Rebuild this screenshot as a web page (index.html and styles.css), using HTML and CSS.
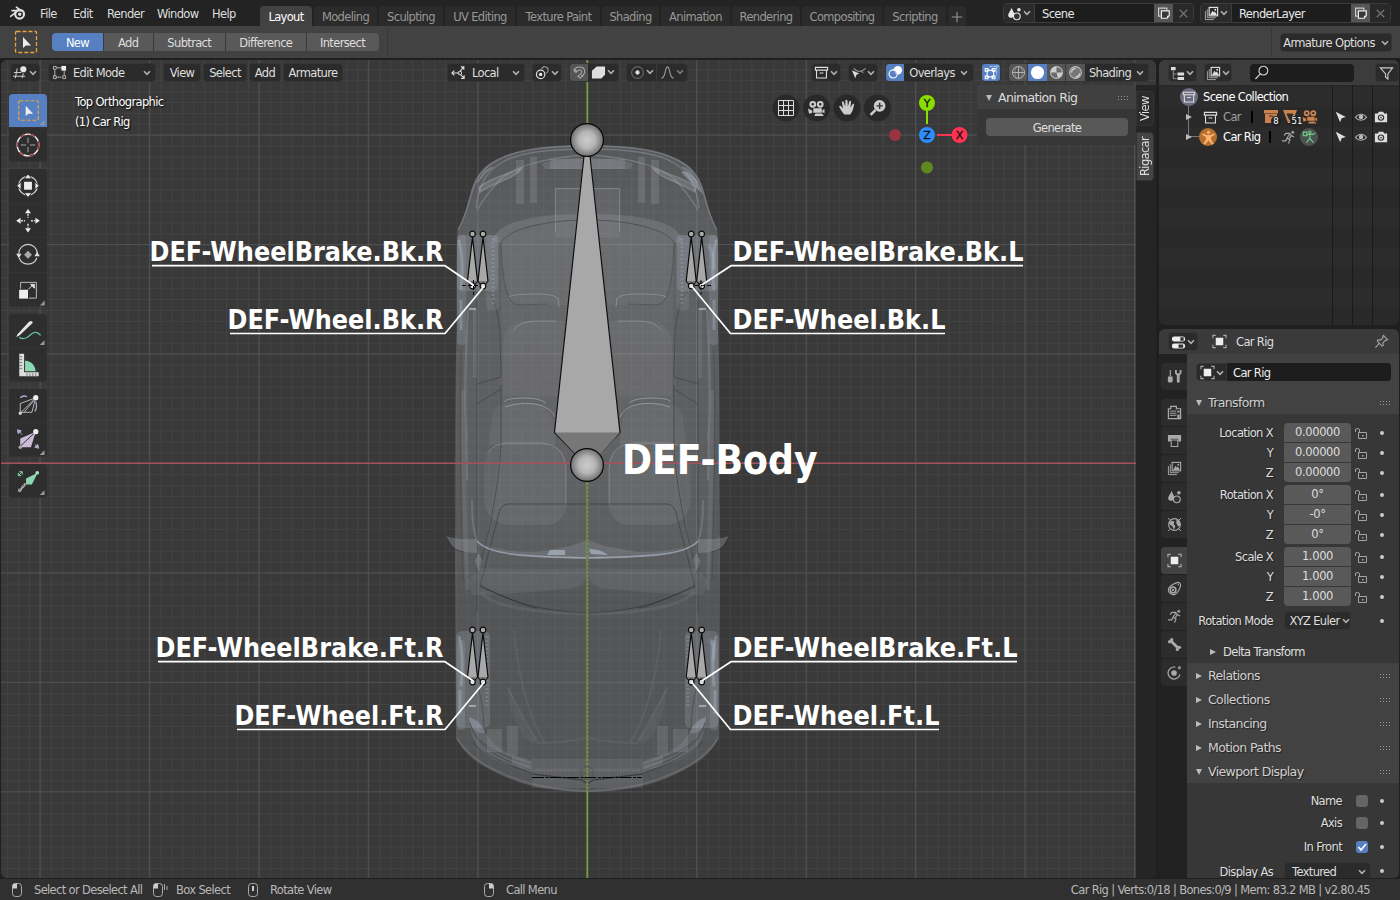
FILE: index.html
```html
<!DOCTYPE html>
<html lang="en">
<head>
<meta charset="utf-8">
<title>Car Rig</title>
<link rel="stylesheet" href="styles.css">
</head>
<body>
<svg width="0" height="0" class="defs">
<defs>
<symbol id="chev" viewBox="0 0 8 6"><path d="M1 1.2 4 4.4 7 1.2" fill="none" stroke="#b0b0b0" stroke-width="1.6"/></symbol>
<symbol id="logo" viewBox="0 0 16 14"><path d="M.6 10.4 8.2 4.4M2 4.6h7.5M6.4 1.2l5 3.8" fill="none" stroke="#e0e0e0" stroke-width="1.6" stroke-linecap="round"/><circle cx="9.6" cy="8.2" r="4.4" fill="none" stroke="#e0e0e0" stroke-width="2.2"/><circle cx="9.7" cy="8.2" r="1.7" fill="#e0e0e0"/></symbol>
<symbol id="selbox" viewBox="0 0 24 24"><rect x="1.5" y="1.5" width="21" height="21" rx="1" fill="none" stroke="#e8a33d" stroke-width="1.3" stroke-dasharray="4 2"/><path d="M9 7v11l2.8-2.6 5.2.2z" fill="#eee"/></symbol>
<symbol id="vp3d" viewBox="0 0 16 16"><path d="M4.500 3.500 2.500 14M1 8h8M0 12h13M11 9l-1.200 5" fill="none" stroke="#c8c8c8" stroke-width="1.100"/><circle cx="11" cy="4.500" r="3.300" fill="#e6e6e6"/></symbol>
<symbol id="editmode" viewBox="0 0 16 16"><path d="M3 5v7M5 3h5M5 13h5M13 6v5" fill="none" stroke="#bbb"/><path d="M1.500 1.500h3v3h-3zM1.500 11.500h3v3h-3zM11.500 11.500h3v3h-3z" fill="none" stroke="#bbb"/><rect x="10" y="1" width="5" height="5" fill="#eee"/></symbol>
<symbol id="orient" viewBox="0 0 16 16"><path d="M1 8.500h8M3.500 6 1 8.500 3.500 11M9.500 7l4-5M10.500 2h3.200v3M10 10l4 4M10.800 14.300H14V11" fill="none" stroke="#ddd" stroke-width="1.200"/><circle cx="9.500" cy="8.500" r="1.900" fill="none" stroke="#ddd"/></symbol>
<symbol id="pivot" viewBox="0 0 16 16"><circle cx="6" cy="10" r="4.500" fill="none" stroke="#ddd" stroke-width="1.300"/><circle cx="6" cy="10" r="1.800" fill="#eee"/><path d="M7 4.500A3.600 3.600 0 1 1 12 8.700" fill="none" stroke="#999" stroke-width="1.200"/></symbol>
<symbol id="magnet" viewBox="0 0 16 16"><path d="M2 5.500C5 .5 13.500 1 13.500 7c0 2-1.500 4.500-5 7L6.300 12C9 10 10.500 8.500 10.300 7 9.800 4.500 6.500 5 4.200 8zM2.800 4.800l2.500 2.200M10 10.500l1.800 1.800" fill="none" stroke="#aaa" stroke-width="1.100"/></symbol>
<symbol id="cube" viewBox="0 0 16 16"><path d="M6 1.500h9V10l-4 4.500H1V6z" fill="#dedede"/></symbol>
<symbol id="prop" viewBox="0 0 16 16"><circle cx="8" cy="8" r="6.300" fill="none" stroke="#666" stroke-width="1.200"/><circle cx="8" cy="8" r="2.300" fill="#ddd"/></symbol>
<symbol id="falloff" viewBox="0 0 16 16"><path d="M1.500 14C6.500 13.500 5 2 8 2s1.500 11.500 6.500 12" fill="none" stroke="#999" stroke-width="1.200"/></symbol>
<symbol id="box" viewBox="0 0 16 16"><path d="M1.500 2.500h13v3h-13zM2.700 5.500h10.600v8.300H2.700zM6 8.500h4" fill="none" stroke="#ddd" stroke-width="1.200"/></symbol>
<symbol id="selvis" viewBox="0 0 16 16"><path d="M1 5.500 8.800 9 5.800 10.300 4.500 14z" fill="#ddd"/><path d="M3 3.500c3.500 4.500 8 4.500 12.500 0M13 8.500l-2-2" fill="none" stroke="#999" stroke-width="1.200"/></symbol>
<symbol id="overlay" viewBox="0 0 16 16"><circle cx="10.500" cy="5.500" r="4.500" fill="#fff"/><circle cx="5.500" cy="9.500" r="4.300" fill="#5680c2" fill-opacity=".65" stroke="#fff" stroke-width="1.200"/></symbol>
<symbol id="xray" viewBox="0 0 16 16"><path d="M4 4.500h7v7H4zM2 2.500h3v3H2zM9.500 2.500h3v3h-3zM2 10.500h3v3H2zM9.500 10.500h3v3h-3z" transform="translate(-.7 1.200)" fill="none" stroke="#fff" stroke-width="1.200"/><path d="M6 1.500h7.500V11M13 1h2v2" fill="none" stroke="#c8d6ee" stroke-dasharray="3 1"/></symbol>
<symbol id="wire" viewBox="0 0 16 16"><circle cx="8" cy="8" r="6.500" fill="none" stroke="#bbb"/><path d="M1.500 8h13M8 1.500v13" stroke="#bbb"/><ellipse cx="8" cy="8" rx="4" ry="6.500" fill="none" stroke="#999" stroke-width=".8"/></symbol>
<symbol id="solid" viewBox="0 0 16 16"><circle cx="8" cy="8" r="7" fill="#fff"/></symbol>
<symbol id="mat" viewBox="0 0 16 16"><circle cx="8" cy="8" r="6.300" fill="#6b6b6b" stroke="#bbb" stroke-width="1.200"/><path d="M8 8V1.700A6.300 6.300 0 0 0 1.700 8zM8 8h6.300A6.300 6.300 0 0 1 9.500 14z" fill="#ccc"/></symbol>
<symbol id="rend" viewBox="0 0 16 16"><circle cx="8" cy="8" r="6.300" fill="#777" stroke="#bbb" stroke-width="1.200"/><path d="M3.800 8A4.200 4.200 0 0 1 8 3.800M12.500 9A5 5 0 0 1 8 13" fill="none" stroke="#ddd" stroke-width="1.300"/></symbol>
<symbol id="scene" viewBox="0 0 16 16"><path d="M5 1.500C5.500 5 8.500 7 8 10.500c-.5 2.500-5.500 3-6.500.5C.5 8 4 5 5 1.500z" fill="currentColor"/><circle cx="10.500" cy="11" r="3.600" fill="#333" stroke="currentColor" stroke-width="1.200"/><circle cx="12.700" cy="4" r="1.900" fill="currentColor"/></symbol>
<symbol id="layers" viewBox="0 0 16 16"><path d="M1.500 5.500v9h9M3.500 3.500v9h9" fill="none" stroke="#aaa"/><rect x="5.500" y="1.500" width="9" height="9" fill="none" stroke="currentColor" stroke-width="1.200"/><path d="m6.500 9.500 2.500-4.500 1.500 2 1.200-1.200 2 3.700z" fill="currentColor"/><circle cx="12" cy="4" r="1" fill="currentColor"/></symbol>
<symbol id="copy" viewBox="0 0 16 16"><path d="M4 11.500H1.800v-9h9.500V5" fill="none" stroke="#ccc" stroke-width="1.300"/><path d="M5 5.500h9V11l-2.500 3H5z" fill="#383838" stroke="#eee" stroke-width="1.400"/><path d="M14 11h-2.500v3z" fill="#eee"/></symbol>
<symbol id="x" viewBox="0 0 16 16"><path d="m4 4 8 8M12 4l-8 8" stroke="#777" stroke-width="1.200"/></symbol>
<symbol id="plus" viewBox="0 0 16 16"><path d="M8 2v12M2 8h12" stroke="#999" stroke-width="1.200"/></symbol>
<symbol id="tree" viewBox="0 0 16 16"><path d="M1 1h5v3.500H1zM8 7h7v3H8zM8 11.800h7v3H8z" fill="#ddd"/><path d="M3.500 5v8.500H7M3.500 8.500H7" fill="none" stroke="#999"/></symbol>
<symbol id="search" viewBox="0 0 16 16"><circle cx="10" cy="6" r="4.700" fill="none" stroke="#ccc" stroke-width="1.200"/><path d="M6.800 9.500 1.500 15" stroke="#ccc" stroke-width="1.400"/></symbol>
<symbol id="filter" viewBox="0 0 16 16"><path d="M1.500 2h13L9.500 8.500V14L7 12V8.500z" fill="none" stroke="#ccc" stroke-width="1.200"/></symbol>
<symbol id="arrow" viewBox="0 0 16 16"><path d="m2 2 11.500 6L8.800 9.300 7 14z" fill="#ddd"/></symbol>
<symbol id="eye" viewBox="0 0 16 16"><path d="M1.500 8.500C5 3.500 11 3.500 14.500 8.500 11 12.800 5 12.800 1.500 8.500z" fill="none" stroke="#aaa" stroke-width="1.200"/><circle cx="8" cy="8" r="2.500" fill="#bbb"/></symbol>
<symbol id="cam" viewBox="0 0 16 16"><path d="M1 4h3.500l1-2h5l1 2H15v10H1z" fill="#ddd"/><circle cx="8" cy="8.700" r="3.700" fill="#333"/><circle cx="8" cy="8.700" r="2.300" fill="#ddd"/><circle cx="8" cy="8.700" r="1" fill="#444"/></symbol>
<symbol id="man" viewBox="0 0 16 16"><circle cx="8" cy="2.600" r="1.700"/><path d="m1 5 1.200-1.400L6 5.300h4l3.800-1.700L15 5l-4.300 2.500.3 3.300 2.400 3.800-1.500 1L8 11.200l-3.900 4.400-1.500-1L5 10.800l.3-3.300z"/></symbol>
<symbol id="run" viewBox="0 0 16 16"><circle cx="12.500" cy="2.500" r="1.600" fill="#999"/><path d="M5 3.500h4L11 6l3 1.500M9.500 4 6.500 8.500l3 2L8 14.500M6.500 9 5 11.500H1M11 6 9 9M5 3.500 3.500 6" fill="none" stroke="#a6a6a6" stroke-width="1.300"/></symbol>
<symbol id="movie" viewBox="0 0 16 16"><path fill-rule="evenodd" d="M4.500 1.300a3.200 3.200 0 1 1 0 6.400 3.200 3.200 0 0 1 0-6.400zm0 2a1.200 1.200 0 1 0 0 2.400 1.200 1.200 0 0 0 0-2.400zM11.500 1.300a3.200 3.200 0 1 1 0 6.400 3.200 3.200 0 0 1 0-6.400zm0 2a1.200 1.200 0 1 0 0 2.400 1.200 1.200 0 0 0 0-2.400z"/><path d="M5 8.300h8v4.200H5zM0 8.500l4 2v2l-3 1zM13.500 10l2-1v4l-2-1zM7 13.200h6l2 2.300H6z"/></symbol>
<symbol id="obj" viewBox="0 0 16 16"><rect x="4" y="4" width="8" height="8" fill="#eee"/><path d="M1 4.500V1.500h3M12 1.500h3v3M15 11.500v3h-3M4 14.500H1v-3" fill="none" stroke="#aaa" stroke-width="1.200"/></symbol>
<symbol id="props" viewBox="0 0 16 16"><rect x="1" y="1.500" width="14" height="5.500" rx="2.500" fill="#eee"/><path d="M10 2.500h3.500v3.500H10z" fill="#333"/><rect x="1" y="9" width="14" height="5.500" rx="2.500" fill="#eee"/><path d="M8 10h5v3.500H8z" fill="#333"/></symbol>
<symbol id="pin" viewBox="0 0 16 16"><path d="m10 1.500 4.500 4.500-1.300.8-1-.3L9.500 9.500l.3 2.600-1.300.7L3.500 7.500 4.300 6.200 7 6.500 9.800 3.800 9.300 2.600zM5.500 10 1.500 14.500" fill="none" stroke="#aaa" stroke-width="1.100"/></symbol>
<symbol id="tool" viewBox="0 0 16 16"><path d="M3.500 1v7" stroke="#aaa" stroke-width="1.200"/><path d="M1 8h5v1.500c.5 2 0 4.500-1 5H2c-1-.5-1.500-3-1-5zM8.500 1v3.500L10.500 7v6.500q1.500 2.500 3 0V7l2-2.500V1L13.500 1v3.500h-3V1z" fill="#aaa"/></symbol>
<symbol id="render" viewBox="0 0 16 16"><path d="M4 4V1.500h6V4h4.500v10.500h-13V4z" fill="none" stroke="#aaa" stroke-width="1.300"/><path d="M3 6.500h7M3 8.800h7M3 11h7" stroke="#aaa"/><path d="M11 6h2.500v2H11zM11 10h2.500v4H11z" fill="#aaa"/></symbol>
<symbol id="print" viewBox="0 0 16 16"><path d="M1 2h14v7h-3V6H4v3H1z" fill="#aaa"/><path d="M4.500 7.500h7v7h-7z" fill="none" stroke="#aaa" stroke-width="1.100"/></symbol>
<symbol id="world" viewBox="0 0 16 16"><circle cx="8" cy="8" r="6.300" fill="none" stroke="#aaa" stroke-width="1.200"/><path d="m2 6 3-2 3 1-1 2.500 2 2.500-2 3.500-1-3.500L3 8zM10 3l3 1 1.500 5-2.500 1-2-3z" fill="#aaa"/><path d="M1 1l2.500 2.500M15 1l-2.500 2.500M1 15l2.500-2.500M15 15l-2.500-2.500" stroke="#aaa"/></symbol>
<symbol id="constr" viewBox="0 0 16 16"><circle cx="6.500" cy="9.500" r="3" fill="none" stroke="#aaa" stroke-width="1.600"/><path d="M1.700 8C3 5 9 2 11.500 1.500c3 0 3.500 3 2.500 5-1 3-2.500 6-5 7.500-4 2-8.500-2-7.300-6z" fill="none" stroke="#aaa" stroke-width="1.200"/><circle cx="12" cy="4" r=".8" fill="#aaa"/><circle cx="6.500" cy="9.500" r="1.200" fill="#aaa"/></symbol>
<symbol id="bone" viewBox="0 0 16 16"><path d="M4.500 4.500l7 7" stroke="#aaa" stroke-width="3"/><circle cx="2.800" cy="5" r="1.800" fill="#aaa"/><circle cx="5" cy="2.800" r="1.800" fill="#aaa"/><circle cx="13.200" cy="11" r="1.800" fill="#aaa"/><circle cx="11" cy="13.200" r="1.800" fill="#aaa"/></symbol>
<symbol id="phys" viewBox="0 0 16 16"><circle cx="7.500" cy="8.500" r="3" fill="#aaa"/><path d="M9 2.300A6.400 6.400 0 1 0 13.800 10" fill="none" stroke="#aaa" stroke-width="1.300"/><circle cx="13.200" cy="3" r="1.900" fill="#888"/></symbol>
<symbol id="lock" viewBox="0 0 13 12"><path d="M1.500 5V3Q1.500 1.500 3 1.500h.5Q5.500 1.500 5.500 3v2.500" fill="none" stroke="#a4a4a4"/><path d="M4.500 5.500h8v6h-8z" fill="none" stroke="#a4a4a4"/><path d="M8 8h1.500v1.500H8z" fill="#a4a4a4"/></symbol>
<symbol id="grip" viewBox="0 0 12 6"><path d="M1 1.500h11M1 4.500h11" stroke="#999" stroke-width="1" stroke-dasharray="1 2"/></symbol>
<symbol id="grid" viewBox="0 0 16 16"><path d="M.5.500h15v15H.5zM5.500 0v16M10.500 0v16M0 5.500h16M0 10.500h16" fill="none" stroke="#ddd"/></symbol>
<symbol id="hand" viewBox="0 0 16 16"><path d="M5.500 14.500C3 12 2 9.500.5 7c.5-1.200 1.800-.8 2.500.5L4.300 9 3.200 3c.3-1.200 1.400-1.200 1.800 0l1.300 4.300L6.500 1.500c.4-1.200 1.500-1.200 1.900 0L8.800 7l1.400-4.800c.5-1 1.600-.8 1.700.4L11.200 8l2-3c.7-.9 1.600-.4 1.400.7C13.800 9 13.500 12 11 14.500z" fill="#ccc"/></symbol>
<symbol id="zoomi" viewBox="0 0 16 16"><circle cx="10" cy="6" r="5.500" fill="#ccc"/><path d="M10 3v6M7 6h6" stroke="#333" stroke-width="1.400"/><path d="M6 10 1.500 14.500" stroke="#ccc" stroke-width="2.500"/></symbol>
<symbol id="ml" viewBox="0 0 12 16"><rect x="1.500" y="1.500" width="9" height="13" rx="3" fill="none" stroke="#aaa"/><path d="M1.500 6.500V3.500q0-2 2-2H6v5z" fill="#ccc"/></symbol>
<g id="corner"><path d="M38 29v5h-5z" fill="#999"/></g>
</defs>
</svg>

<div class="topbar">
  <svg class="logo"><use href="#logo"/></svg>
  <nav class="menus"><span class="m1">File</span><span class="m2">Edit</span><span class="m3">Render</span><span class="m4">Window</span><span class="m5">Help</span></nav>
  <div class="tabs">
    <span class="tab on w52">Layout</span><span class="tab w63">Modeling</span><span class="tab w64">Sculpting</span><span class="tab w70">UV Editing</span><span class="tab w83">Texture Paint</span><span class="tab w57">Shading</span><span class="tab w69">Animation</span><span class="tab w68">Rendering</span><span class="tab w80">Compositing</span><span class="tab w62">Scripting</span><span class="tab w18"><svg class="i14"><use href="#plus"/></svg></span>
  </div>
  <div class="idbox sc"><span class="idi"><svg class="i16"><use href="#scene"/></svg><svg class="ch"><use href="#chev"/></svg></span><span class="idn">Scene</span><span class="idc"><svg class="i14"><use href="#copy"/></svg></span><span class="idx"><svg class="i16"><use href="#x"/></svg></span></div>
  <div class="idbox rl"><span class="idi"><svg class="i16"><use href="#layers"/></svg><svg class="ch"><use href="#chev"/></svg></span><span class="idn">RenderLayer</span><span class="idc"><svg class="i14"><use href="#copy"/></svg></span><span class="idx"><svg class="i16"><use href="#x"/></svg></span></div>
</div>

<div class="toolset">
  <svg class="i24"><use href="#selbox"/></svg>
  <div class="seg"><span class="on w51">New</span><span class="w48">Add</span><span class="w71">Subtract</span><span class="w80">Difference</span><span class="w73">Intersect</span></div>
  <i class="div1"></i>
  <i class="div2"></i>
  <div class="b armopt"><span>Armature Options</span><svg class="ch"><use href="#chev"/></svg></div>
</div>

<div class="main">
  <div class="viewport">
    <svg class="scene" viewBox="1 60 1155 818">
      <defs>
        <pattern id="minor" x="587.200" y="463.200" width="10.945" height="10.945" patternUnits="userSpaceOnUse"><path d="M0 .5h10.945M.5 0v10.945" stroke="#424242" stroke-width="1"/></pattern>
        <pattern id="major" x="586.700" y="462.900" width="109.450" height="109.450" patternUnits="userSpaceOnUse"><path d="M0 .5h109.450M.5 0v109.450" stroke="#505050" stroke-width="1.100"/></pattern>
        <radialGradient id="ball"><stop offset="0" stop-color="#cccccc"/><stop offset=".5" stop-color="#b6b6b6"/><stop offset="1" stop-color="#707070"/></radialGradient>
        <linearGradient id="bodyg" x1="0" y1="145" x2="0" y2="792" gradientUnits="userSpaceOnUse"><stop offset="0" stop-color="#9a9ea6" stop-opacity=".3"/><stop offset=".15" stop-color="#a3a6ab" stop-opacity=".34"/><stop offset=".6" stop-color="#9a9da2" stop-opacity=".32"/><stop offset=".7" stop-color="#8e9196" stop-opacity=".32"/><stop offset="1" stop-color="#8b8f94" stop-opacity=".32"/></linearGradient>
        <linearGradient id="seatg" x1="0" y1="0" x2="0" y2="1"><stop offset="0" stop-color="#c0c4ca" stop-opacity=".06"/><stop offset="1" stop-color="#c0c4ca" stop-opacity=".1"/></linearGradient>
        <linearGradient id="cabing" x1="0" y1="220" x2="0" y2="590" gradientUnits="userSpaceOnUse"><stop offset="0" stop-color="#b4b7bc" stop-opacity=".12"/><stop offset=".7" stop-color="#b4b8be" stop-opacity=".07"/><stop offset="1" stop-color="#b4b8be" stop-opacity=".03"/></linearGradient>
        <filter id="soft" x="-20%" y="-20%" width="140%" height="140%"><feGaussianBlur stdDeviation="1.300"/></filter>
        <filter id="soft2" x="-20%" y="-20%" width="140%" height="140%"><feGaussianBlur stdDeviation=".6"/></filter>
        <!-- left half of the car, mirrored for the right -->
        <g id="half">
          <path d="M587.500 145C540 145 515 150 497 159 481 167 474 178 470 195 466 210 464 219 458 229 456 240 457 300 457 330 455 360 455 480 455 560L456 738C462 750 472 759 482 765 497 774 515 782 532 786 550 790 570 792 587.500 792z" fill="url(#bodyg)"/>
          <path d="M587.500 146C540 146 515 151 498 160 482 168 475 179 471 195 467 210 464 219 458 230" fill="none" stroke="#878d96" stroke-width="1.400" stroke-opacity=".6"/>
          <path d="M587.500 149C545 149 515 154 501 163 486 172 479 184 476 208M587.500 155C545 157 510 168 500 180 490 190 483 200 477 210" fill="none" stroke="#a3a7ae" stroke-opacity=".4" stroke-width="1.300"/>
          <path d="M479 187C490 178 505 175 522 168 516 178 500 180 480 192zM477 183l8-12 8-4" fill="#c3cad4" fill-opacity=".2" stroke="#c3cad4" stroke-opacity=".25" stroke-width="1.500"/>
          <g filter="url(#soft2)" fill="#c4cad4" fill-opacity=".16"><rect x="516" y="160" width="8" height="44"/><rect x="530" y="157" width="7" height="46"/><path d="M542 164q10-6 45.500-6v11H545z"/><path d="M550 159h37.500v10H550z"/></g>
          <path d="M587.500 188.500H555.500V238H587.500" fill="#c4cad4" fill-opacity=".09"/><path d="M587.500 188.500H555.500V232" fill="none" stroke="#b8bec6" stroke-opacity=".35"/>
          <path d="M587.500 214C550 214 525 217 505 226 497 231 494 236 492 242L501 243C505 232 540 219 587.500 220z" fill="#aeb4bd" fill-opacity=".2"/>
          <path d="M501 243C506 230 545 220 587.500 220V305H520C508 305 505 290 501 243z" fill="#b8bcc4" fill-opacity=".05"/>
          <path d="M501 243C506 230 545 220 587.500 220M501 243C502 280 506 305 519 305L548 304" fill="none" stroke="#393b3e" stroke-opacity=".55"/>
          <path d="M509 297q2-3 28-3 16 0 21 4l1 9" fill="none" stroke="#c2c7cf" stroke-opacity=".35"/>
          <path d="M587.500 220C545 220 506 230 501 243L502 440 483 560 481 590H587.500z" fill="url(#cabing)"/>
          <path d="M503 345q1-24 25-24h35q24 1 24.500 20v55H503z" fill="#c0c4ca" fill-opacity=".07"/>
          <path d="M513 331q6-10 24-10h20" fill="none" stroke="#cacdd2" stroke-opacity=".3"/>
          <path d="M492 415q4-12 20-12h20q20 2 22 25l1 17h-66z" fill="url(#seatg)"/>
          <path d="M504 402q2-4 20-4 16 0 22 5M505 407q20-7 38-1 9 4 12 11" fill="none" stroke="#d0d5dc" stroke-opacity=".4"/>
          <path d="M484 470q0-27 24-27h34q24 1 24 26v36q-2 20-22 20h-36q-21-3-24-24z" fill="url(#seatg)"/>
          <path d="M488 453q5-10 22-10h30q24 1 26 25v37" fill="none" stroke="#ccd0d6" stroke-opacity=".27"/>
          <!-- side glass -->
          <path d="M463 345q8-35 23-55 13 8 15 50l1 66q0 50-8 95l-13 85-14-12q-6-30-6-100z" fill="#9aa0aa" fill-opacity=".06"/>
          <path d="M487 292q9 5 13 40l1 45-24 7M501 389l-24 15M477 300V612M501 385V440q0 30-12 90l-11 43" fill="none" stroke="#36383b" stroke-opacity=".55"/>
          <path d="M468 310q-5 90-1 130M472 500q0 30 5 40M466 430l1 50" fill="none" stroke="#b3bfd0" stroke-opacity=".22" stroke-width="2"/>
          <path d="M475 308v70M463 390q0 80 4 200" fill="none" stroke="#afb7c5" stroke-opacity=".13" stroke-width="4"/>
          <path d="M456 345q-1 100 0 190M461 350q-2 100 2 230" fill="none" stroke="#2f3134" stroke-opacity=".25"/>
          <path d="M498 517q2-13 10-13h79.500" fill="none" stroke="#2d2f31" stroke-opacity=".55"/>
          <path d="M498 517 480 586" stroke="#2d2f31" stroke-opacity=".5" fill="none"/>
          <!-- wiper cowl and dashboard -->
          <path d="M446 536q12 4 31 3v14q-18 0-25-7z" fill="#93979c" fill-opacity=".4"/><path d="M446 536q4 14 18 16" fill="none" stroke="#2f3134" stroke-opacity=".5"/>
          <path d="M471 545l7 8-3 8 4 12 3-13-3-6" fill="#a9b5c6" fill-opacity=".3"/>
          <path d="M478 541q20 12 60 11l32-6 17.500-6V558Q505 559 478 541z" fill="#a4adbb" fill-opacity=".22"/>
          <path d="M477 541c12 14 50 16 110.500 17" fill="none" stroke="#becbdc" stroke-opacity=".55" stroke-width="1.700" filter="url(#soft2)"/>
          <path d="M587 575q-4 13-20 14-50 5-95 6l-5-15 13-12q60 2 107 0z" fill="#9aa3b3" fill-opacity=".12"/>
          <path d="M480 585C510 602 540 611 587.500 613M480 587C510 598 525 607 537 608" fill="none" stroke="#2e3033" stroke-opacity=".6"/>
          <path d="M481 592q15 20 106.500 22" fill="none" stroke="#a6aaae" stroke-opacity=".12" stroke-width="3"/>
          <!-- bonnet -->
          <path d="M508 688q15 30 30 55M514 630q6 70 30 112M537 743q25 0 50-5" fill="none" stroke="#b9bcc0" stroke-opacity=".09" stroke-width="2"/>
          <path d="M507 685l20 40 10 15-4 4q-20-10-26-59z" fill="#fff" fill-opacity=".04"/>
          <!-- wheels -->
          <g fill="#aeb8c8" fill-opacity=".2"><rect x="457" y="235" width="41" height="56" rx="5"/><rect x="457" y="235" width="9" height="110" rx="4"/><rect x="486" y="235" width="13" height="75" rx="4" fill-opacity=".14"/><rect x="456" y="631" width="34" height="97" rx="6"/><rect x="457" y="640" width="8" height="90" rx="3"/></g>
          <g fill="none" stroke="#b9c8dd" stroke-opacity=".3" stroke-width="3" filter="url(#soft2)"><path d="M459 240q5 20 2 50M461 300v30M459 636q5 20 2 50M460 690v24"/><path d="M493 238v66M487 636v70" stroke-dasharray="2 2" stroke-opacity=".2"/></g>
          <path d="M469 309h7M469 706h7" stroke="#ddd" stroke-opacity=".5" stroke-width="2"/>
          <path d="M479 690q4 15 5 38" fill="none" stroke="#35383b" stroke-opacity=".5"/>
          <!-- head lamp and bumper -->
          <path d="M469 717q8 2 18 18 10 17 44 27v8q-30-4-49-18-12-12-13-35z" fill="#b7c2d4" fill-opacity=".14"/>
          <path d="M469 717q14 4 16 16-13 2-16-16z" fill="#c7d4e6" fill-opacity=".2"/>
          <path d="M470 723q7 30 61 47M480 740q15 15 51 25M473 742q10 15 59 31" fill="none" stroke="#2f3235" stroke-opacity=".5"/>
          <g fill="#c4cad4" fill-opacity=".14"><rect x="487" y="729" width="15" height="23"/><rect x="507" y="726" width="11" height="29"/><path d="M512 754l20 7v12l-20-9z"/></g>
          <path d="M457 738q10 17 30 28 20 11 45 18 25 6 55 7" fill="none" stroke="#8b8f94" stroke-opacity=".35" stroke-width="1.500"/>
          <path d="M587.500 759H532v29h55.500z" fill="#c4c8ce" fill-opacity=".1"/><path d="M532 774l50 6 5 3.500" fill="none" stroke="#303235" stroke-opacity=".7" stroke-width="1.500"/>
          <path d="M535 770h52" stroke="#888" stroke-opacity=".3" stroke-width="3" stroke-dasharray="2 1"/>
        </g>
        <g id="smallbone" stroke="#0b0b0b" stroke-width="1.200"><path d="M0 3-5 47l5 6 5-6z" fill="#a8a8a8"/><path d="M-4.500 47h9L0 53z" fill="#7b7b7b" stroke="none"/><circle r="2.800" fill="#ababab"/><circle cy="52" r="2.800" fill="#ddd"/></g>
      </defs>
      <rect x="1" y="60" width="1155" height="818" fill="#393939"/>
      <rect x="1" y="60" width="1155" height="818" fill="url(#minor)"/>
      <rect x="1" y="60" width="1155" height="818" fill="url(#major)"/>
      <use href="#half"/>
      <use href="#half" transform="translate(1175 0) scale(-1 1)"/>
      <path d="M550 550h15v5h-18zM589 549q12 0 19 6l-17-1z" fill="#cfe0f4" fill-opacity=".45" filter="url(#soft2)"/>
      <path d="M681 172q8-4 18 12l4 10q-9-8-22-22z" fill="#c9d8ec" fill-opacity=".35" filter="url(#soft2)"/>
      <path d="M708 245q6 5 6 25M710 640q6 5 3 20" stroke="#b6c8e0" stroke-width="3" stroke-opacity=".35" fill="none" filter="url(#soft)"/>
      <path d="M1 463.300h1135" stroke="#a6505c" stroke-width="1.500"/>
      <path d="M587.300 60v818" stroke="#789a40" stroke-width="1.800"/>
      <path d="M587.500 481v311" stroke="#5c713a" stroke-width="1" stroke-dasharray="2 2"/>
      <circle cx="587" cy="773" r="6.500" fill="none" stroke="#55585a" stroke-width="1.300"/>
      <path d="M532 777.500h110" stroke="#050505" stroke-width="1.200" stroke-dasharray="12 1.500 3 1"/>
      <use href="#smallbone" x="472.500" y="234"/><use href="#smallbone" x="483" y="234"/><use href="#smallbone" x="691.200" y="234"/><use href="#smallbone" x="701.700" y="234"/>
      <use href="#smallbone" x="472.500" y="630"/><use href="#smallbone" x="483" y="630"/><use href="#smallbone" x="691.200" y="630"/><use href="#smallbone" x="701.700" y="630"/>
      <path d="M462 285.500h17M473.500 280v15M695 285.500h17M701 280v15" stroke="#0b0b0b" stroke-dasharray="4 2"/>
      <path d="M554.500 432.500 584 156h6l30 276.500-20 21h-25z" fill="#a8a8a8" stroke="#101010" stroke-width="1.200"/>
      <path d="M555 432.500h65l-20 22h-24z" fill="#777"/>
      <circle cx="587" cy="140" r="16.400" fill="url(#ball)" stroke="#060606" stroke-width="1.200"/>
      <circle cx="587" cy="465" r="16.400" fill="url(#ball)" stroke="#060606" stroke-width="1.200"/>
      <g fill="none" stroke="#fff" stroke-width="1.700" stroke-linejoin="round">
        <path d="M152 265.700h293l28 19M230 333.500h215l39-47M158 661.700h287l28 19M237 729.500h208l39-47"/>
        <path d="M1023 265.700H731l-29 19M945 333.500H730.500L691.500 286M1017 661.700H731l-29 19M939 729.500H730.500L691.500 682"/>
      </g>
      <g class="lab">
        <text x="149.500" y="260.500" textLength="294" lengthAdjust="spacingAndGlyphs">DEF-WheelBrake.Bk.R</text>
        <text x="227.500" y="328.500" textLength="216" lengthAdjust="spacingAndGlyphs">DEF-Wheel.Bk.R</text>
        <text x="155.500" y="656.500" textLength="288" lengthAdjust="spacingAndGlyphs">DEF-WheelBrake.Ft.R</text>
        <text x="234.500" y="724.500" textLength="209" lengthAdjust="spacingAndGlyphs">DEF-Wheel.Ft.R</text>
        <text x="732.500" y="260.500" textLength="291" lengthAdjust="spacingAndGlyphs">DEF-WheelBrake.Bk.L</text>
        <text x="732.500" y="328.500" textLength="213" lengthAdjust="spacingAndGlyphs">DEF-Wheel.Bk.L</text>
        <text x="732.500" y="656.500" textLength="285" lengthAdjust="spacingAndGlyphs">DEF-WheelBrake.Ft.L</text>
        <text x="732.500" y="724.500" textLength="207" lengthAdjust="spacingAndGlyphs">DEF-Wheel.Ft.L</text>
        <text x="622" y="474" textLength="195.500" lengthAdjust="spacingAndGlyphs" class="big">DEF-Body</text>
      </g>
      <!-- navigation gizmo -->
      <path d="M927 103v21" stroke="#8bdc00" stroke-width="2"/><path d="M937 135h15" stroke="#ff3352" stroke-width="2"/>
      <circle cx="895" cy="135" r="6" fill="#993442"/><circle cx="927" cy="167.500" r="6" fill="#5f8820"/>
      <circle cx="927" cy="103" r="8" fill="#8bdc00"/><circle cx="927" cy="135" r="8" fill="#2e8cff"/><circle cx="959.500" cy="135" r="8" fill="#ff3352"/>
      <g class="ax"><text x="927" y="107">Y</text><text x="927" y="139">Z</text><text x="959.500" y="139">X</text></g>
      <g fill="#292929"><circle cx="786" cy="108" r="13.500"/><circle cx="816.500" cy="108" r="13.500"/><circle cx="847" cy="108" r="13.500"/><circle cx="877.500" cy="108" r="13.500"/></g>
      <use href="#grid" x="778" y="100" width="16" height="16"/><use href="#movie" x="808" y="99.500" width="17" height="17" fill="#ccc"/><use href="#hand" x="838.500" y="99" width="17" height="17"/><use href="#zoomi" x="869" y="99.500" width="17" height="17"/>
    </svg>

    <div class="vhead">
      <div class="b w30"><svg class="i16"><use href="#vp3d"/></svg><svg class="ch"><use href="#chev"/></svg></div>
      <div class="b mode"><svg class="i15"><use href="#editmode"/></svg><span>Edit Mode</span><svg class="ch"><use href="#chev"/></svg></div>
      <div class="hm"><span class="b w38">View</span><span class="b w44">Select</span><span class="b w32">Add</span><span class="b w60">Armature</span></div>
      <div class="b local"><svg class="i16"><use href="#orient"/></svg><span>Local</span><svg class="ch"><use href="#chev"/></svg></div>
      <div class="b w30 g7"><svg class="i16"><use href="#pivot"/></svg><svg class="ch"><use href="#chev"/></svg></div>
      <div class="b pair g7"><span class="gr w18"><svg class="i15"><use href="#magnet"/></svg></span><span class="w30"><svg class="i16"><use href="#cube"/></svg><svg class="ch"><use href="#chev"/></svg></span></div>
      <div class="b pair g7"><span class="w30 sep"><svg class="i16"><use href="#prop"/></svg><svg class="ch"><use href="#chev"/></svg></span><span class="w30"><svg class="i16"><use href="#falloff"/></svg><svg class="ch dim"><use href="#chev"/></svg></span></div>
      <div class="vright">
        <div class="b w30"><svg class="i16"><use href="#box"/></svg><svg class="ch"><use href="#chev"/></svg></div>
        <div class="b w30"><svg class="i16"><use href="#selvis"/></svg><svg class="ch"><use href="#chev"/></svg></div>
        <div class="b pair ovl"><span class="bl w18"><svg class="i16"><use href="#overlay"/></svg></span><span class="w69 tx">Overlays<svg class="ch"><use href="#chev"/></svg></span></div>
        <div class="b pair"><span class="bl w18"><svg class="i16"><use href="#xray"/></svg></span></div>
        <div class="b pair"><span class="gr w19 sep"><svg class="i16"><use href="#wire"/></svg></span><span class="bl w19"><svg class="i16"><use href="#solid"/></svg></span><span class="gr w19 sep"><svg class="i16"><use href="#mat"/></svg></span><span class="gr w19"><svg class="i16"><use href="#rend"/></svg></span><span class="w63 tx">Shading<svg class="ch"><use href="#chev"/></svg></span></div>
      </div>
    </div>

    <div class="info"><span>Top Orthographic</span><span>(1) Car Rig</span></div>

    <div class="tools">
      <div class="tg">
        <svg class="on" viewBox="0 0 38 34"><use href="#selbox" x="8" y="5.500" width="23" height="23"/><use href="#corner" x="-2" y="-2"/></svg>
        <svg viewBox="0 0 38 34"><circle cx="19" cy="17.500" r="11.200" fill="none" stroke="#eee" stroke-width="1.400"/><circle cx="19" cy="17.500" r="11.200" fill="none" stroke="#a03a3a" stroke-width="1.400" stroke-dasharray="5 6"/><path d="M19 10v5.500M19 19.500V25M11.500 17.500H17M21 17.500h5.500" stroke="#aaa"/></svg>
      </div>
      <div class="tg tall">
        <svg viewBox="0 0 38 34"><circle cx="19" cy="17" r="9.500" fill="none" stroke="#ddd" stroke-width="1.200"/><rect x="15" y="13" width="8" height="8" fill="#eee"/><path d="m15 10 4-5 4 5zM15 24l4 5 4-5zM12 13l-4.500 4 4.500 4zM26 13l4.500 4-4.500 4z" fill="#eee" stroke="#303030"/></svg>
        <svg viewBox="0 0 38 34"><path d="m16 9.500 3-4.500 3 4.500zM16 24.500l3 4.500 3-4.500zM11.500 14 7 17l4.500 3zM26.500 14l4.500 3-4.500 3z" fill="#eee"/><path d="M19 10v4M19 20v4M12 17h4M22 17h4" stroke="#ddd" stroke-width="1.500" stroke-dasharray="2 1"/></svg>
        <svg viewBox="0 0 38 34"><path d="M9.500 16a9.500 9.500 0 0 1 19 0M28 20a9.500 9.500 0 0 1-18 0" fill="none" stroke="#ccc" stroke-width="1.200"/><path d="M7 16h5.500L9.700 20.500zM25.500 18.500h5.500L28.300 14z" fill="#ddd"/><path d="m19 13 4 4-4 4-4-4z" fill="#aaa"/></svg>
        <svg viewBox="0 0 38 34"><path d="M11.500 16V9.500h16v16H20" fill="none" stroke="#bbb"/><rect x="10" y="17" width="9" height="9" fill="#eee"/><path d="m19.500 16.500 4-4M21.500 11.500h4V15.500z" stroke="#ddd" fill="#ddd"/><use href="#corner" x="-2" y="-1"/></svg>
      </div>
      <div class="tg">
        <svg viewBox="0 0 38 34"><path d="m8 21 12-13q3-2 4 1L11 21.500 7 24z" fill="#e4e4e4"/><path d="M10 24c5 3 8 1 11-2s7-5 11 0" fill="none" stroke="#68c49a" stroke-width="1.400"/><use href="#corner" x="-2" y="-2"/></svg>
        <svg viewBox="0 0 38 34"><path d="M10 6h5v19h15v4H10z" fill="#ddd"/><path d="M10 9h3M10 12h3M10 15h3M10 18h3M10 21h3M18 29v-3M21 29v-3M24 29v-3M27 29v-3" stroke="#777"/><path d="M16 24V13c7 1 10 5 11 11z" fill="#8bd9b2"/><path d="M16 12c8 1 11 6 12 12" fill="none" stroke="#333"/></svg>
      </div>
      <div class="tg">
        <svg viewBox="0 0 38 34"><path d="M11 25V15l16-6-4 15H13zM11 25 27 9M15 24l10-12" fill="none" stroke="#bbb"/><path d="M18 8q-4-2-7 1M27 13q2 6-1 10" fill="none" stroke="#b7a5cb" stroke-width="1.300"/><circle cx="27" cy="9" r="2.700" fill="#eee"/><circle cx="11" cy="25" r="1.700" fill="#ccc"/></svg>
        <svg viewBox="0 0 38 34"><path d="M11 16 27 9l-5 16H11z" fill="#cbbad8"/><path d="M11 24 27 9" stroke="#333"/><path d="m8 7 4 1-3 3zM30 26l-4-1 3-3zM9 8l4 4M26 22l3 3" fill="#baa7c8" stroke="#baa7c8"/><circle cx="27" cy="9" r="2.700" fill="#eee"/><circle cx="11" cy="25" r="1.800" fill="#aaa"/><use href="#corner" x="-2" y="-1"/></svg>
      </div>
      <div class="tg">
        <svg viewBox="0 0 38 34"><path d="M17 15 29 9l-6 12h-6z" fill="#8bd9b2"/><path d="M12 26q0-4 4-6 1 3-4 6l-2 2 14-15" fill="none" stroke="#bbb"/><circle cx="28.500" cy="9" r="1.900" fill="#a4e7c5"/><path d="m9 12 4-4M10 8h3v3M9 9v3h3" fill="none" stroke="#8bd9b2"/><circle cx="10.500" cy="27" r="1.500" fill="none" stroke="#bbb"/><use href="#corner" x="-2" y="-2"/></svg>
      </div>
    </div>

    <div class="npanel">
      <div class="nh"><i class="td"></i><span>Animation Rig</span><svg class="grip"><use href="#grip"/></svg></div>
      <div class="gen">Generate</div>
    </div>
    <div class="ntabs"><span class="nt v1">View</span><span class="nt v2">Rigacar</span></div>
  </div>

  <div class="side">
    <div class="outliner">
      <div class="ohead">
        <div class="b w30"><svg class="i16"><use href="#tree"/></svg><svg class="ch"><use href="#chev"/></svg></div>
        <div class="b w30"><svg class="i16"><use href="#layers"/></svg><svg class="ch"><use href="#chev"/></svg></div>
        <div class="srch"><svg class="i16"><use href="#search"/></svg></div>
        <div class="b flt"><svg class="i16"><use href="#filter"/></svg></div>
      </div>
      <div class="olist">
        <div class="or r0"><span class="circ"><svg class="i14"><use href="#box"/></svg></span><span class="sc1">Scene Collection</span></div>
        <div class="or r1"><i class="tr"></i><svg class="i16 bx"><use href="#box"/></svg><span class="nm dimt">Car</span><i class="bar"></i>
          <svg class="counts" viewBox="0 0 56 20"><g fill="#c9824e"><path d="M1 3h14v3.500H1zM2 7h12v9H2z"/><path d="M20 3h14l-5 13h-4z"/><use href="#movie" x="39" y="2" width="16" height="15"/></g><path d="M6 9h4M24 7h6l-3 6z" stroke="#2b2b2b" fill="#2b2b2b"/><circle cx="13" cy="14" r="5" fill="#222"/><rect x="27" y="9" width="12" height="10" rx="5" fill="#222"/><text x="13" y="17">8</text><text x="34" y="17">51</text></svg>
          <span class="rt"><svg class="i14"><use href="#arrow"/></svg><svg class="i14"><use href="#eye"/></svg><svg class="i14"><use href="#cam"/></svg></span></div>
        <div class="or r2"><i class="tr"></i><span class="circ or1"><svg class="i15" fill="#ffb46e"><use href="#man"/></svg></span><span class="nm">Car Rig</span><i class="bar"></i><svg class="i16 rn"><use href="#run"/></svg><span class="circ gn"><svg class="i14" viewBox="0 0 16 16"><g fill="none" stroke="#70c98a" stroke-width="1.300"><path d="M1.500 2.500h4v4h-4zM5.500 5H13l2-2M9 5.500v4l-4 5M9 9.500l4 5"/><circle cx="9" cy="2.500" r="1.300"/></g></svg></span>
          <span class="rt"><svg class="i14"><use href="#arrow"/></svg><svg class="i14"><use href="#eye"/></svg><svg class="i14"><use href="#cam"/></svg></span></div>
        <i class="vl c1"></i><i class="vl c2"></i><i class="vl c3"></i><i class="tl"></i>
      </div>
    </div>

    <div class="props">
      <div class="phead"><div class="b w30"><svg class="i16"><use href="#props"/></svg><svg class="ch"><use href="#chev"/></svg></div><svg class="i16 ob"><use href="#obj"/></svg><span>Car Rig</span><svg class="i16 pin"><use href="#pin"/></svg></div>
      <div class="pmain">
        <div class="ptabs">
          <span class="pt"><svg class="i16"><use href="#tool"/></svg></span>
          <span class="pt gap"><svg class="i16"><use href="#render"/></svg></span><span class="pt"><svg class="i16"><use href="#print"/></svg></span><span class="pt"><svg class="i16"><use href="#layers"/></svg></span><span class="pt"><svg class="i16"><use href="#scene"/></svg></span><span class="pt"><svg class="i16"><use href="#world"/></svg></span>
          <span class="pt gap on"><svg class="i16"><use href="#obj"/></svg></span><span class="pt"><svg class="i16"><use href="#constr"/></svg></span><span class="pt"><svg class="i16"><use href="#run"/></svg></span><span class="pt"><svg class="i16"><use href="#bone"/></svg></span><span class="pt"><svg class="i16"><use href="#phys"/></svg></span>
        </div>
        <div class="pbody">
          <div class="name"><span class="b"><svg class="i16"><use href="#obj"/></svg><svg class="ch"><use href="#chev"/></svg></span><span class="nf">Car Rig</span></div>
          <div class="ph first"><i class="td"></i><span>Transform</span><svg class="grip"><use href="#grip"/></svg></div>
          <div class="pp">
            <div class="grp"><div class="fr"><label>Location X</label><b>0.00000</b><svg class="lk"><use href="#lock"/></svg><i class="dot"></i></div><div class="fr"><label>Y</label><b>0.00000</b><svg class="lk"><use href="#lock"/></svg><i class="dot"></i></div><div class="fr"><label>Z</label><b>0.00000</b><svg class="lk"><use href="#lock"/></svg><i class="dot"></i></div></div>
            <div class="grp"><div class="fr"><label>Rotation X</label><b>0°</b><svg class="lk"><use href="#lock"/></svg><i class="dot"></i></div><div class="fr"><label>Y</label><b>-0°</b><svg class="lk"><use href="#lock"/></svg><i class="dot"></i></div><div class="fr"><label>Z</label><b>0°</b><svg class="lk"><use href="#lock"/></svg><i class="dot"></i></div></div>
            <div class="grp"><div class="fr"><label>Scale X</label><b>1.000</b><svg class="lk"><use href="#lock"/></svg><i class="dot"></i></div><div class="fr"><label>Y</label><b>1.000</b><svg class="lk"><use href="#lock"/></svg><i class="dot"></i></div><div class="fr"><label>Z</label><b>1.000</b><svg class="lk"><use href="#lock"/></svg><i class="dot"></i></div></div>
            <div class="fr rm"><label>Rotation Mode</label><span class="b dd">XYZ Euler<svg class="ch"><use href="#chev"/></svg></span><i class="dot far"></i></div>
            <div class="delta"><i class="tr"></i>Delta Transform</div>
          </div>
          <div class="ph"><i class="tr"></i><span>Relations</span><svg class="grip"><use href="#grip"/></svg></div>
          <div class="ph"><i class="tr"></i><span>Collections</span><svg class="grip"><use href="#grip"/></svg></div>
          <div class="ph"><i class="tr"></i><span>Instancing</span><svg class="grip"><use href="#grip"/></svg></div>
          <div class="ph"><i class="tr"></i><span>Motion Paths</span><svg class="grip"><use href="#grip"/></svg></div>
          <div class="ph"><i class="td"></i><span>Viewport Display</span><svg class="grip"><use href="#grip"/></svg></div>
          <div class="pp vd">
            <div class="cr"><label>Name</label><i class="cb"></i><i class="dot"></i></div>
            <div class="cr"><label>Axis</label><i class="cb"></i><i class="dot"></i></div>
            <div class="cr c3r"><label>In Front</label><i class="cb on"><svg viewBox="0 0 12 12"><path d="m2.500 6 2.500 3 5-6" fill="none" stroke="#fff" stroke-width="1.600"/></svg></i><i class="dot"></i></div>
            <div class="fr da"><label>Display As</label><span class="b dd">Textured<svg class="ch"><use href="#chev"/></svg></span><i class="dot"></i></div>
          </div>
        </div>
      </div>
    </div>
  </div>
</div>

<div class="status">
  <span class="s1"><svg class="ms"><use href="#ml"/></svg>Select or Deselect All</span>
  <span class="s2"><svg class="msd" viewBox="0 0 16 16"><use href="#ml" width="12" height="16"/><path d="M12.500 2v6M15 4v4" stroke="#aaa"/></svg>Box Select</span>
  <span class="s3"><svg class="ms" viewBox="0 0 12 16"><rect x="1.500" y="1.500" width="9" height="13" rx="3" fill="none" stroke="#aaa"/><rect x="5" y="4" width="2" height="5" fill="#ccc"/></svg>Rotate View</span>
  <span class="s4"><svg class="ms" viewBox="0 0 12 16"><rect x="1.500" y="1.500" width="9" height="13" rx="3" fill="none" stroke="#aaa"/><path d="M6 1.500h2.500q2 0 2 2v3H6z" fill="#ccc"/></svg>Call Menu</span>
  <span class="s5">Car Rig | Verts:0/18 | Bones:0/9 | Mem: 83.2 MB | v2.80.45</span>
</div>
</body>
</html>
```
FILE: styles.css
```css
* { box-sizing: border-box; }
body { margin: 0; width: 1400px; height: 900px; overflow: hidden; background: #202020; color: #dedede; font: 11.500px/14px "DejaVu Sans", sans-serif; letter-spacing: -.65px; display: flex; flex-direction: column; white-space: nowrap; }
svg { flex: none; display: block; }
i { font-style: normal; flex: none; }
.defs { position: absolute; }
.i14 { width: 14px; height: 14px; } .i15 { width: 15px; height: 15px; } .i16 { width: 15px; height: 15px; } .i24 { width: 24px; height: 24px; }
.ch { width: 8px; height: 6px; }
.dim { opacity: .6; }
.b { height: 19px; background: #2b2b2b; border: 1px solid #353535; border-radius: 4px; display: flex; align-items: center; justify-content: center; gap: 1px; padding-top: 1px; }
.w18{width:18px}.w19{width:19px}.w30{width:30px}.w31{width:31px}.w32{width:32px}.w38{width:38px}.w44{width:44px}.w48{width:48.500px}.w51{width:51px}.w52{width:52px}.w57{width:57px}.w60{width:60px}.w62{width:62px}.w63{width:63px}.w64{width:64px}.w68{width:68px}.w69{width:69px}.w70{width:70px}.w71{width:71.500px}.w73{width:73px}.w80{width:80px}.w83{width:83px}

/* top bar */
.topbar { height: 26px; flex: none; display: flex; align-items: center; background: #232323; }
.logo { width: 16px; height: 14px; margin-left: 10px; }
.menus { display: flex; margin-left: 14px; width: 220px; padding-top: 1px; }
.m1 { width: 33px; } .m2 { width: 34px; } .m3 { width: 50px; } .m4 { width: 55px; }
.tabs { display: flex; gap: 2px; height: 20px; align-self: flex-end; }
.tab { height: 20px; padding-top: 1px; background: #2b2b2b; color: #989898; border-radius: 4px 4px 0 0; display: flex; align-items: center; justify-content: center; }
.tab.on { background: #424242; color: #fff; }
.idbox { display: flex; height: 20px; border: 1px solid #3c3c3c; border-radius: 4px; overflow: hidden; background: #1d1d1d; color: #e6e6e6; }
.idbox > span { display: flex; align-items: center; justify-content: center; }
.sc { width: 191px; margin-left: 37px; } .rl { width: 191px; margin-left: 6px; }
.idi { width: 31px; background: #2b2b2b; border-right: 1px solid #3c3c3c; gap: 1px; }
.idbox .idn { flex: 1; justify-content: flex-start; padding: 1px 0 0 7px; }
.idc { width: 19px; background: #555; } .idx { width: 20px; background: #292929; }

/* tool settings */
.toolset { height: 32px; flex: none; display: flex; align-items: center; background: #424242; padding-left: 14px; }
.seg { display: flex; gap: 1px; margin-left: 14px; height: 18px; background: #3a3a3a; border-radius: 4px; overflow: hidden; }
.seg span { display: flex; align-items: center; justify-content: center; background: #595959; padding-top: 1px; }
.seg .w80 { width: 79.500px; } .seg .w73 { width: 72px; }
.seg .on { background: #5680c2; color: #fff; }
.div1, .div2 { width: 1px; height: 28px; background: #363636; }
.div1 { margin-left: 8px; } .div2 { margin-left: auto; }
.armopt { width: 112px; margin: 0 8px 0 8px; gap: 6px; }

.main { height: 820px; flex: none; display: flex; padding: 2px 0 0 1px; gap: 3px; background: #1f1f1f; }
.viewport { position: relative; width: 1155px; height: 818px; border-radius: 6px; overflow: hidden; background: #3a3a3a; }
.scene { position: absolute; inset: 0; width: 1155px; height: 818px; color: #ddd; }
.lab { font: bold 26px "DejaVu Sans", sans-serif; letter-spacing: 0; fill: #fff; }
.lab .big { font-size: 40px; }
.ax { font: 11px "DejaVu Sans", sans-serif; fill: #111; stroke: #111; stroke-width: .3; text-anchor: middle; letter-spacing: 0; }
.vhead { position: relative; display: flex; height: 24px; align-items: center; padding-left: 9px; }
.mode, .local { justify-content: flex-start; padding: 1px 4px 0 3px; gap: 6px; }
.mode .ch, .local .ch { margin-left: auto; }
.mode { width: 108px; margin-left: 8px; }
.hm { display: flex; gap: 2px; margin-left: 7px; }
.local { width: 78px; margin-left: 104px; }
.g7 { margin-left: 7px; }
.pair { padding: 0; overflow: hidden; gap: 0; }
.pair span { height: 17px; display: flex; align-items: center; justify-content: center; gap: 1px; }
.pair .tx { gap: 5px; padding-top: 1px; }
.gr { background: #555; } .bl { background: #5680c2; }
.sep { border-right: 1px solid #3a3a3a; }
.vright { margin-left: auto; margin-right: 7px; display: flex; gap: 7px; }
.info { position: absolute; left: 74px; top: 35px; display: flex; flex-direction: column; gap: 6px; color: #fff; text-shadow: 1px 1px 2px #000; }
.tools { position: absolute; left: 8px; top: 34px; display: flex; flex-direction: column; gap: 7px; }
.tg { display: flex; flex-direction: column; border-radius: 4px; overflow: hidden; }
.tg svg { width: 38px; height: 34px; background: #2e2e2e; border-bottom: 1px solid #333; }
.tg.tall svg { height: 34.500px; }
.tg .on { background: #5680c2; }
.npanel { position: absolute; left: 976px; top: 25px; width: 159px; height: 60px; background: #363636; }
.nh { height: 24px; background: #404040; display: flex; align-items: center; font-size: 12.500px; padding: 1px 7px 0 9px; gap: 6px; }
.grip { width: 12px; height: 6px; margin-left: auto; }
.gen { margin: 9px 8px 0 9px; height: 18px; padding-top: 1px; background: #585858; border-radius: 4px; display: flex; align-items: center; justify-content: center; }
.ntabs { position: absolute; left: 1135px; top: 25px; width: 20px; bottom: 0; background: #252525; padding-top: 6px; display: flex; flex-direction: column; gap: 6px; }
.nt { width: 18px; writing-mode: vertical-rl; transform: rotate(180deg); display: flex; align-items: center; justify-content: center; background: #2b2b2b; border-radius: 4px 0 0 4px; border: 1px solid #333; }
.v1 { height: 35px; } .v2 { height: 49px; background: #454545; }
.td { width: 0; height: 0; border: 3.500px solid transparent; border-top: 6px solid #bbb; border-bottom: 0; }
.tr { width: 0; height: 0; border: 3.500px solid transparent; border-left: 6px solid #bbb; border-right: 0; }

/* outliner */
.side { width: 240px; display: flex; flex-direction: column; gap: 4px; }
.outliner { height: 265px; border-radius: 6px; overflow: hidden; background: #2b2b2b; }
.ohead { height: 25px; background: #3c3c3c; display: flex; align-items: center; padding-left: 9px; }
.ohead .b + .b { margin-left: 7px; }
.srch { width: 109px; height: 18px; margin-left: 18px; background: #1d1d1d; border-radius: 4px; padding: 1px 4px; }
.flt { margin-left: 21px; width: 24px; flex: none; justify-content: flex-start; padding-left: 3px; }
.olist { position: relative; height: 240px; padding-top: 2px; background: repeating-linear-gradient(#2c2c2c 0 20px, #292929 20px 40px) 0 2px; }
.or { height: 20px; display: flex; align-items: center; color: #fff; }
.circ { width: 18px; height: 18px; border-radius: 9px; background: #6c6c80; display: flex; align-items: center; justify-content: center; z-index: 1; }
.r0 { padding-left: 21px; gap: 5px; }
.r1, .r2 { padding-left: 27px; }
.or .tr { z-index: 1; }
.bx { margin-left: 11px; }
.nm { margin-left: 6px; width: 37px; } .r1 .nm { margin-left: 5px; width: 19px; } .dimt { color: #a0a0a0; }
.bar { width: 2px; height: 12px; background: #000; margin-left: 9px; }
.counts { width: 56px; height: 20px; margin-left: 10px; font: 8.500px "DejaVu Sans", sans-serif; letter-spacing: 0; fill: #fff; text-anchor: middle; }
.or1 { background: #b3702f; margin-left: 7px; } .gn { background: #4c524e; margin-left: 4px; } .rn { margin-left: 10px; }
.rt { margin-left: auto; margin-right: 11px; display: flex; gap: 6px; }
.vl { position: absolute; top: 0; bottom: 0; width: 1px; background: #1a1a1a; }
.c1 { left: 173px; } .c2 { left: 193px; } .c3 { left: 213px; }
.tl { position: absolute; left: 29px; top: 18px; width: 12px; height: 34px; border-left: 1px solid #777; border-bottom: 1px solid #777; }

/* properties */
.props { height: 549px; border-radius: 6px; overflow: hidden; background: #222; }
.phead { height: 25px; background: #3a3a3a; display: flex; align-items: center; padding-left: 9px; }
.ob { margin-left: 14px; margin-right: 9px; } .pin { margin-left: auto; margin-right: 10px; }
.pmain { display: flex; }
.ptabs { width: 28px; padding: 9px 0 0 2px; display: flex; flex-direction: column; gap: 1.500px; color: #aaa; }
.pt { height: 26.500px; background: #2c2c2c; border-radius: 4px 0 0 4px; display: flex; align-items: center; justify-content: center; }
.pt.gap { margin-top: 8px; } .pt.on { background: #424242; }
.pbody { width: 212px; height: 524px; background: #424242; overflow: hidden; }
.name { margin: 9px 8px 0 9px; height: 18px; display: flex; }
.name .b { width: 31px; height: 18px; border-radius: 4px 0 0 4px; }
.nf { flex: 1; background: #1d1d1d; border-radius: 0 4px 4px 0; padding: 3px 0 0 6px; color: #eee; }
.ph { height: 24px; display: flex; align-items: center; padding: 1px 8px 0 9px; gap: 6px; font-size: 12.500px; letter-spacing: -.62px; color: #d0d0d0; text-shadow: 1px 1px 1px #222; }
.ph.first { margin-top: 10px; height: 23px; }
.pp { background: #373737; height: 249px; padding-top: 9px; }
.grp { display: flex; flex-direction: column; gap: 1px; height: 58px; margin-bottom: 4px; }
.fr { display: flex; align-items: center; flex: 1; text-shadow: 1px 1px 1px #222; }
.fr label { width: 86px; text-align: right; margin-right: 11px; padding-top: 1px; }
.fr b { font: 11.500px/19px "DejaVu Sans", sans-serif; letter-spacing: -.35px; width: 67px; height: 100%; background: #595959; text-align: center; text-shadow: none; }
.grp .fr:first-child b { border-radius: 4px 4px 0 0; } .grp .fr:last-child b { border-radius: 0 0 4px 4px; }
.lk { width: 13px; height: 12px; margin-left: 3px; }
.dot { width: 4px; height: 4px; border-radius: 2px; background: #ccc; margin-left: 13px; }
.rm { height: 19px; flex: none; margin-top: 6px; }
.dd { width: 67px; padding-left: 4px; text-shadow: none; gap: 2px; } .far { margin-left: 29px; }
.delta { display: flex; align-items: center; gap: 7px; padding-left: 23px; height: 18px; margin-top: 13px; }
.vd { padding-top: 7px; height: 96px; }
.cr { display: flex; height: 22px; align-items: center; text-shadow: 1px 1px 1px #222; }
.c3r { height: 26px; }
.cr label { width: 155px; text-align: right; margin-right: 14px; }
.cb { width: 12px; height: 12px; background: #656565; border-radius: 3px; } .cb.on { background: #5680c2; }
.cr .dot { margin-left: 12px; }
.da { height: 22px; } .da .dd { width: 87px; justify-content: space-between; padding: 1px 4px 0 7px; } .da .dot { margin-left: 9px; }

/* status bar */
.status { height: 22px; flex: none; position: relative; background: #303030; border-top: 1px solid #1f1f1f; display: flex; align-items: center; color: #b8b8b8; padding: 1px 30px 0 11px; }
.status span { display: flex; align-items: center; }
.ms { width: 12px; height: 16px; margin-right: 11px; } .msd { width: 16px; height: 16px; margin-right: 8px; }
.s1 { width: 141px; } .s2 { width: 95px; } .s3 { width: 236px; } .s5 { margin-left: auto; }
```
